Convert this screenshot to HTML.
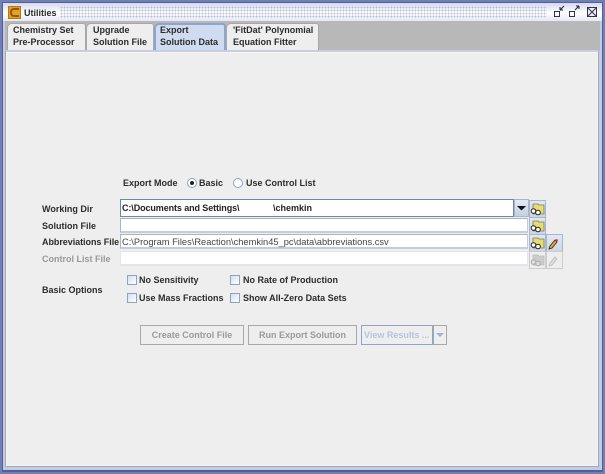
<!DOCTYPE html>
<html><head><meta charset="utf-8">
<style>
html,body{margin:0;padding:0}
body{width:605px;height:474px;overflow:hidden;position:relative;background:#e8ebf5;font-family:"Liberation Sans",sans-serif;font-size:9px;color:#333}
div,span,svg{position:absolute;box-sizing:border-box}
.t{white-space:nowrap;font-weight:bold;line-height:12px;color:#2c2c2c;font-size:9px}
.f{background:#fff;border:1px solid #a8b4c4;border-width:1px 1px 2px 1px;border-color:#a8b4c4 #c4ccd8 #c4ccd8 #a8b4c4}
.tab{background:#eee;border:1px solid #a8a8a8;border-bottom:none;border-radius:5px 3px 0 0}
.ib{width:17px;height:18px;background:linear-gradient(#e2e8f2,#ccd6e6);border:1px solid #a9b6ca}
.cb{width:10px;height:10px;border:1px solid #8fa2bf;background:linear-gradient(135deg,#d5dfee,#fff)}
.btn{border:1px solid #a8a8a8;background:#eee;color:#999;font-weight:bold;text-align:center;line-height:18px;white-space:nowrap;font-size:9px}
</style></head><body>
<div style="left:0;top:0;width:605px;height:474px;background:#6f80b8"></div>
<div style="left:2px;top:2px;width:601px;height:470px;background:#56608c"></div>
<div style="left:3px;top:3px;width:599px;height:467px;background:#c0cbe6"></div>
<div style="left:3px;top:3px;width:599px;height:18px;background:linear-gradient(#d3daf0,#fff 55%,#e4e8f5)"></div>
<div style="left:60px;top:6px;width:487px;height:12px;background-image:radial-gradient(#bcc3d8 0.8px,transparent 1px);background-size:3px 3px"></div>
<div style="left:8px;top:6px;width:13px;height:13px;background:#e8a020;border:1px solid #b9770e"></div>
<div style="left:10px;top:8px;width:9px;height:9px;border:2px solid #8a5a10;border-right:none;border-radius:4px 0 0 4px"></div>
<div class="t" style="left:24px;top:7px">Utilities</div>
<svg style="left:552px;top:4px" width="50" height="16" viewBox="0 0 50 16">
<rect x="2.500" y="7.500" width="5" height="5" fill="#fff" stroke="#334"/>
<path d="M8 6 L12 2 M8 6 h3 M8 6 v-3" stroke="#223" fill="none"/>
<rect x="17.500" y="7.500" width="5" height="5" fill="#fff" stroke="#334"/>
<path d="M23 6 L27 2 M27 2 h-3 M27 2 v3" stroke="#223" fill="none"/>
<rect x="35.500" y="3.500" width="9" height="9" fill="#eef" stroke="#334"/>
<path d="M36 4 L44 12 M44 4 L36 12" stroke="#334" fill="none"/>
</svg>
<div style="left:5px;top:21px;width:595px;height:30px;background:#b8b8b8"></div>
<div style="left:5px;top:50px;width:594px;height:417px;background:#eee;border:1px solid #a8a8a8;border-top:2px solid #c4cfe2;box-shadow:inset 0 0 0 1px #f4f4f4"></div>
<div class="tab" style="left:7px;top:23px;width:79px;height:27px"></div>
<div class="tab" style="left:86px;top:23px;width:68px;height:27px"></div>
<div class="tab" style="left:154px;top:23px;width:72px;height:27px;background:#cfdcf0;border:2px solid #8fa3cc;border-bottom:none"></div>
<div class="tab" style="left:226px;top:23px;width:93px;height:27px"></div>
<div class="t" style="left:13px;top:24px">Chemistry Set<br>Pre-Processor</div>
<div class="t" style="left:93px;top:24px">Upgrade<br>Solution File</div>
<div class="t" style="left:160px;top:24px">Export<br>Solution Data</div>
<div class="t" style="left:233px;top:24px">'FitDat' Polynomial<br>Equation Fitter</div>

<div class="t" style="left:123px;top:177px">Export Mode</div>
<div style="left:187px;top:178px;width:10px;height:10px;border-radius:50%;border:1px solid #8fa2bf;background:#fff"></div>
<div style="left:190px;top:181px;width:4px;height:4px;border-radius:50%;background:#222"></div>
<div class="t" style="left:199px;top:177px">Basic</div>
<div style="left:233px;top:178px;width:10px;height:10px;border-radius:50%;border:1px solid #8fa2bf;background:#fff"></div>
<div class="t" style="left:246px;top:177px">Use Control List</div>

<div class="t" style="left:42px;top:203px">Working Dir</div>
<div class="t" style="left:42px;top:220px">Solution File</div>
<div class="t" style="left:42px;top:236px;letter-spacing:-.05px">Abbreviations File</div>
<div class="t" style="left:42px;top:253px;color:#999">Control List File</div>

<div class="f" style="left:120px;top:199px;width:394px;height:18px;border:1px solid #6f86ad"></div>
<div class="t" style="left:122px;top:202px;color:#222;letter-spacing:-.1px">C:\Documents and Settings\</div>
<div class="t" style="left:273px;top:202px;color:#222">\chemkin</div>
<div style="left:514px;top:199px;width:15px;height:18px;background:linear-gradient(#e4ebf5,#c4d0e2);border:1px solid #a9b6ca"></div>
<svg style="left:517px;top:205px" width="10" height="6"><path d="M0 1h9L4.500 5.500z" fill="#111"/></svg>
<div class="f" style="left:120px;top:218px;width:408px;height:15px"></div>
<div class="f" style="left:120px;top:234px;width:408px;height:15px"></div>
<div class="t" style="left:122px;top:236px;font-weight:normal;color:#444;font-size:9.300px">C:\Program Files\Reaction\chemkin45_pc\data\abbreviations.csv</div>
<div class="f" style="left:120px;top:251px;width:408px;height:15px;border-color:#e2e4ea"></div>

<div class="ib" style="left:529px;top:200px"></div>
<div class="ib" style="left:529px;top:217px"></div>
<div class="ib" style="left:529px;top:234px"></div>
<div class="ib" style="left:546px;top:234px"></div>
<div class="ib" style="left:529px;top:251px;background:#eee;border-color:#ccc"></div>
<div class="ib" style="left:546px;top:251px;background:#eee;border-color:#ccc"></div>
<svg style="left:529px;top:200px" width="34" height="70" viewBox="0 0 34 70">
<g><path d="M4 4h5l1 1h5v9H4z" fill="#e8dc70" stroke="#776" stroke-width=".8"/><circle cx="4.500" cy="11" r="2.300" fill="#fff" stroke="#222"/><circle cx="9" cy="12.500" r="2.300" fill="#fff" stroke="#222"/></g>
<g transform="translate(0,17)"><path d="M4 4h5l1 1h5v9H4z" fill="#e8dc70" stroke="#776" stroke-width=".8"/><circle cx="4.500" cy="11" r="2.300" fill="#fff" stroke="#222"/><circle cx="9" cy="12.500" r="2.300" fill="#fff" stroke="#222"/></g>
<g transform="translate(0,34)"><path d="M4 4h5l1 1h5v9H4z" fill="#e8dc70" stroke="#776" stroke-width=".8"/><circle cx="4.500" cy="11" r="2.300" fill="#fff" stroke="#222"/><circle cx="9" cy="12.500" r="2.300" fill="#fff" stroke="#222"/></g>
<g transform="translate(0,51)"><path d="M4 4h5l1 1h5v9H4z" fill="#ccc" stroke="#bbb" stroke-width=".8"/><circle cx="4.500" cy="11" r="2.300" fill="#ddd" stroke="#aaa"/><circle cx="9" cy="12.500" r="2.300" fill="#ddd" stroke="#aaa"/></g>
<path d="M21 46l5-6 2 2-5 6-3 1z" fill="#e8b020" stroke="#222" stroke-width=".8"/><path d="M26 40l2 2 1-2-1-1z" fill="#c33"/>
<path d="M21 63l5-6 2 2-5 6-3 1z" fill="#ddd" stroke="#bbb" stroke-width=".8"/>
</svg>

<div class="t" style="left:42px;top:284px">Basic Options</div>
<div class="cb" style="left:127px;top:275px"></div>
<div class="t" style="left:139px;top:274px">No Sensitivity</div>
<div class="cb" style="left:230px;top:275px"></div>
<div class="t" style="left:243px;top:274px">No Rate of Production</div>
<div class="cb" style="left:127px;top:293px"></div>
<div class="t" style="left:139px;top:292px">Use Mass Fractions</div>
<div class="cb" style="left:230px;top:293px"></div>
<div class="t" style="left:243px;top:292px">Show All-Zero Data Sets</div>

<div class="btn" style="left:140px;top:325px;width:104px;height:20px">Create Control File</div>
<div class="btn" style="left:248px;top:325px;width:109px;height:20px">Run Export Solution</div>
<div class="btn" style="left:361px;top:325px;width:72px;height:20px;border:1px solid #8fa3cc;color:#b4c4de;text-align:left;padding-left:2px">View Results ...</div>
<div style="left:433px;top:325px;width:14px;height:20px;border:1px solid #a8a8a8;background:#eee"></div>
<svg style="left:436px;top:333px" width="9" height="5"><path d="M0 0h8L4 4z" fill="#9fb2cf"/></svg>
</body></html>
